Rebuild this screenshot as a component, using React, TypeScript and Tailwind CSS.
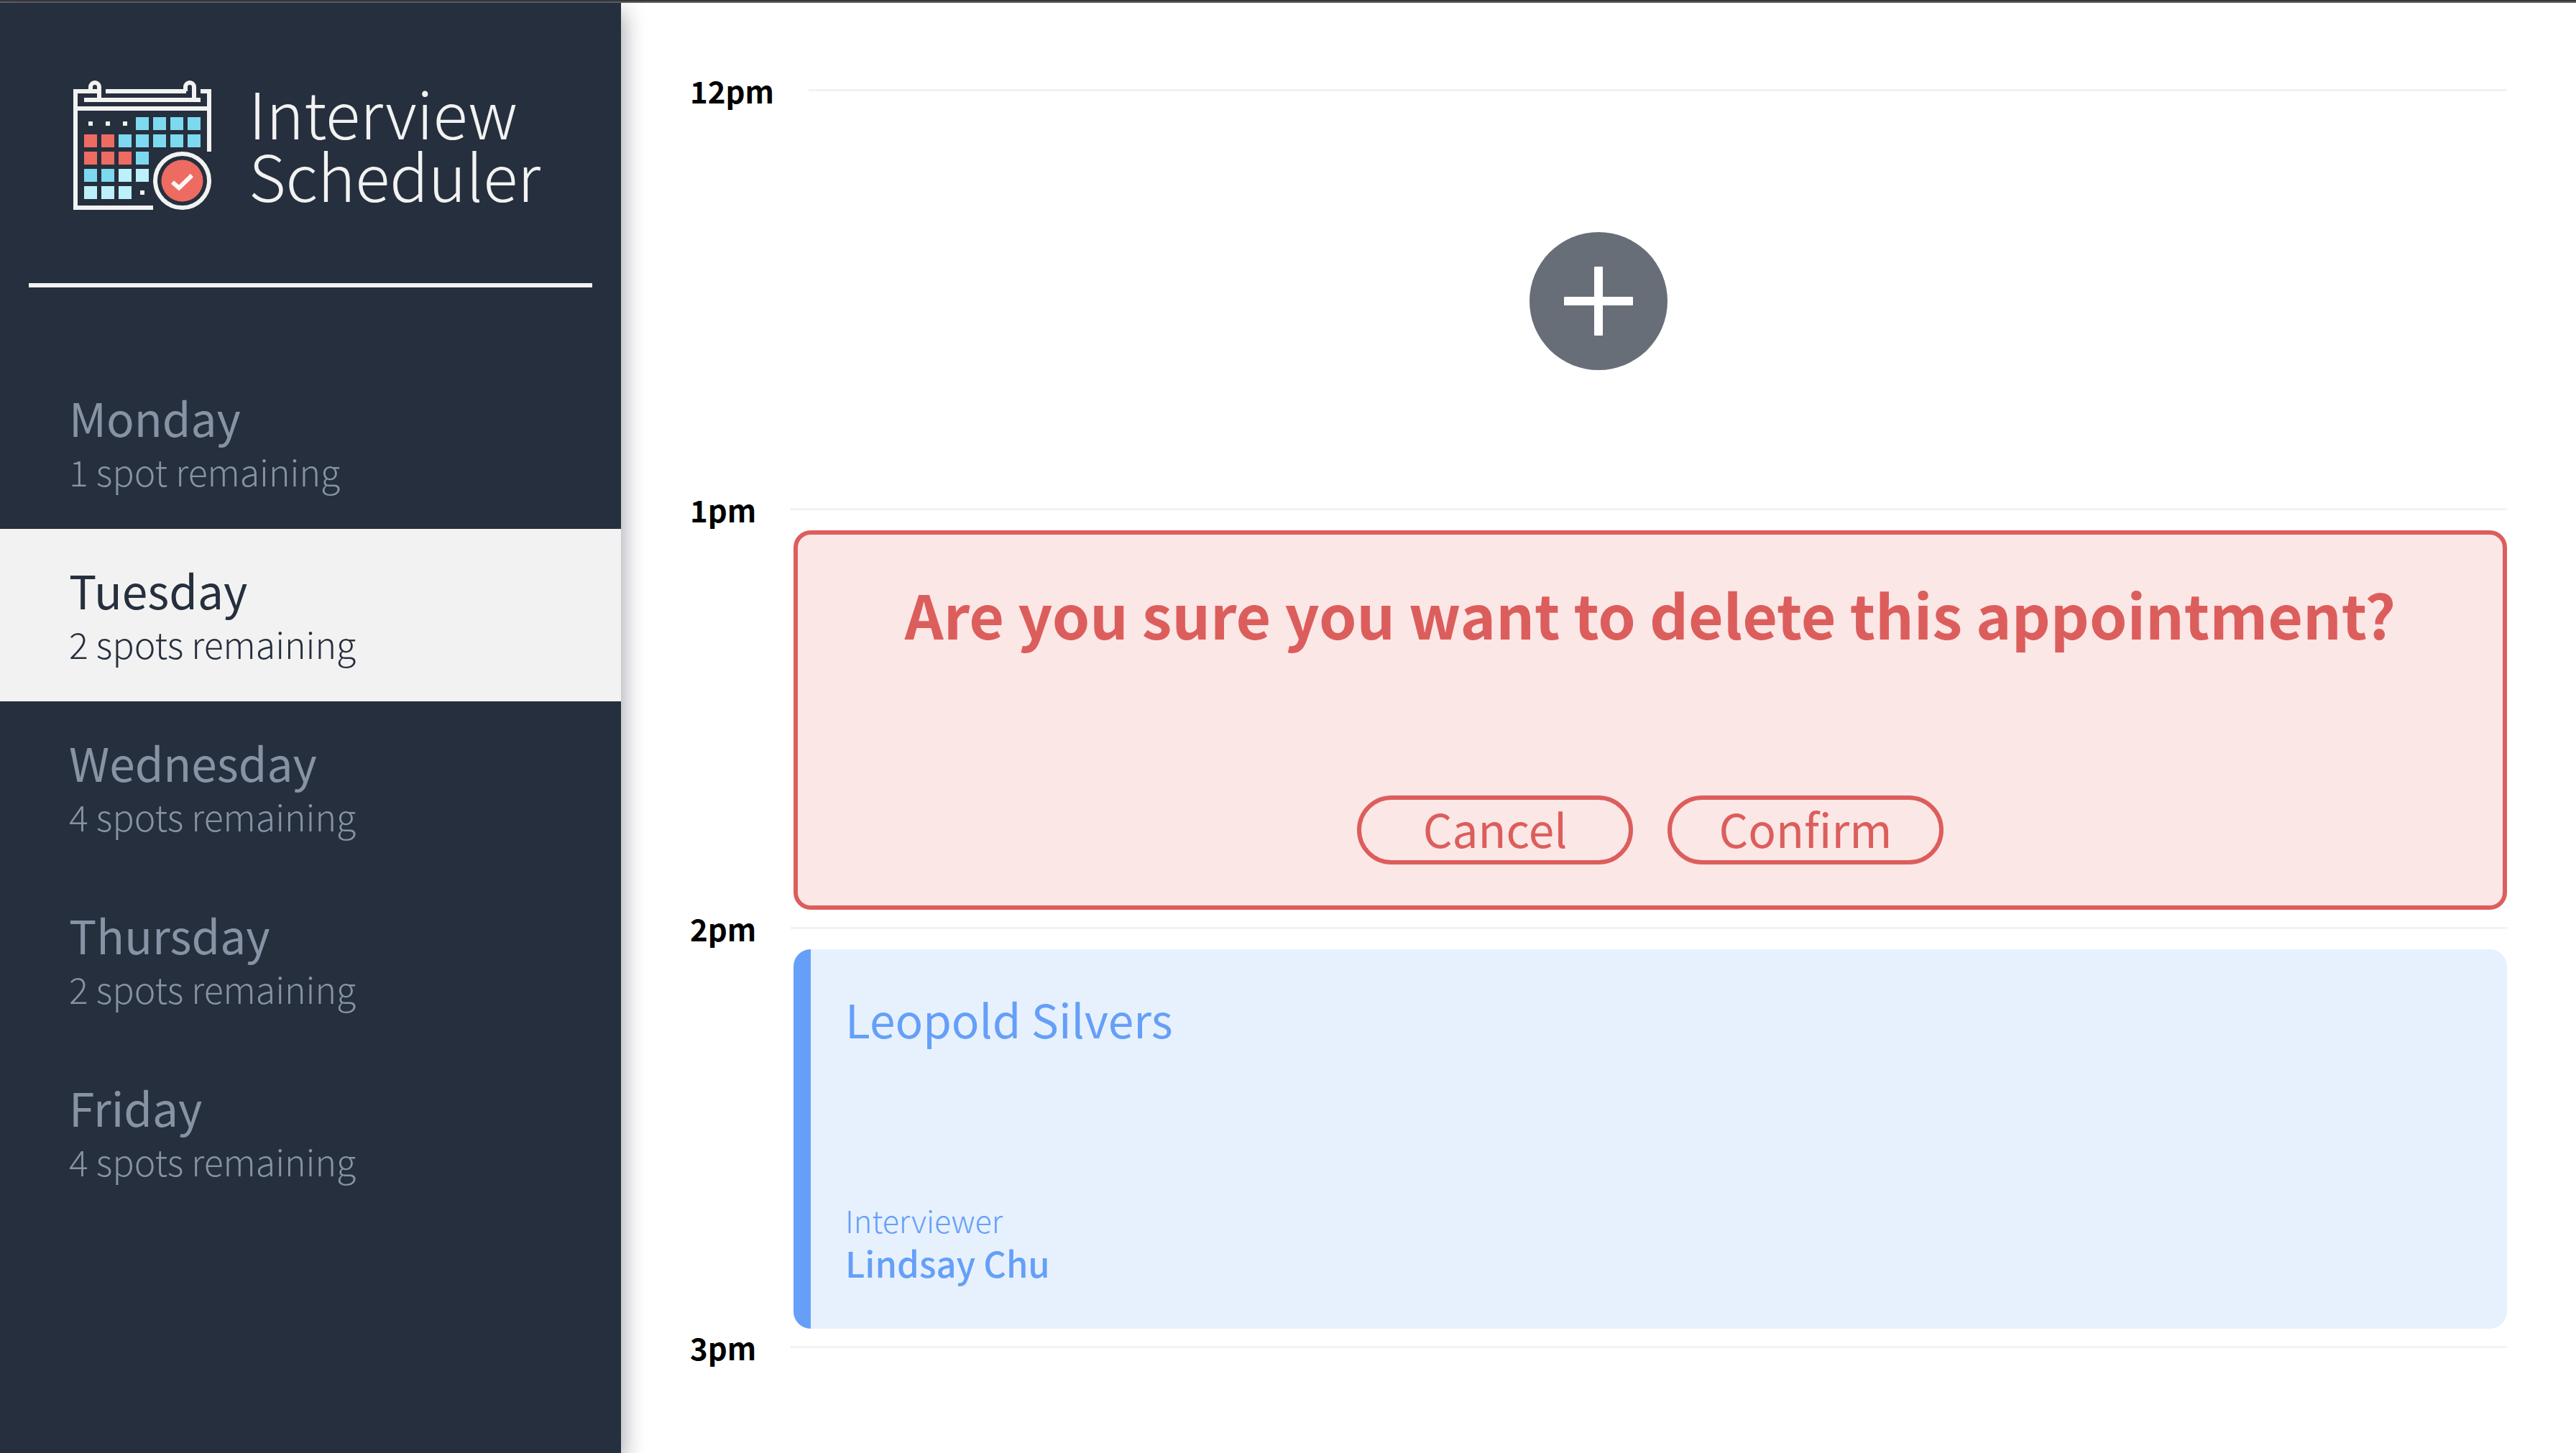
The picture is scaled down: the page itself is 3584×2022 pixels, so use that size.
import type { ReactNode } from "react";

type Day = { name: string; spots: number };

const days: Day[] = [
  { name: "Monday", spots: 1 },
  { name: "Tuesday", spots: 2 },
  { name: "Wednesday", spots: 4 },
  { name: "Thursday", spots: 2 },
  { name: "Friday", spots: 4 },
];

const BLUE = "#7dd9f0";
const PALE = "#bcf0fa";
const RED = "#ee6b62";

// Calendar squares, one row per week; null leaves the cell empty, "dot" draws a marker.
const weeks: (string | null)[][] = [
  ["dot", "dot", "dot", BLUE, BLUE, BLUE, BLUE],
  [RED, RED, BLUE, BLUE, BLUE, BLUE, BLUE],
  [RED, RED, RED, BLUE, null, null, null],
  [BLUE, BLUE, PALE, PALE, null, null, null],
  [PALE, PALE, PALE, "dot", null, null, null],
];

function CalendarLogo() {
  return (
    <svg viewBox="0 0 192 180" className="h-45 w-48 shrink-0" aria-hidden="true" fill="none">
      <g stroke="#f2f2f2" strokeWidth="6">
        <path d="M36 15H3V177H111" />
        <path d="M45 15H157" />
        <path d="M177 15H189V99" />
        <path d="M15 27H177" />
        <path d="M3 39H189" />
        <path d="M24 15V9a6 6 0 0 1 12 0V26" />
        <path d="M156 15V9a6 6 0 0 1 12 0V26" />
      </g>
      {weeks.map((week, row) =>
        week.map((cell, col) => {
          if (!cell) return null;
          const x = 15 + col * 24;
          const y = 51 + row * 24;
          return cell === "dot" ? (
            <rect key={`${row}-${col}`} x={x + 6} y={y + 6} width="6" height="6" fill="#f2f2f2" />
          ) : (
            <rect key={`${row}-${col}`} x={x} y={y} width="18" height="18" fill={cell} />
          );
        }),
      )}
      <circle cx="151.500" cy="139.500" r="37.500" stroke="#f2f2f2" strokeWidth="6" />
      <circle cx="151.500" cy="139.500" r="29" fill={RED} />
      <path d="M138 141.500L147 149.500L165 132" stroke="#fdf6f5" strokeWidth="6" />
    </svg>
  );
}

function DayItem({ day, selected }: { day: Day; selected: boolean }) {
  return (
    <li>
      <button
        type="button"
        aria-pressed={selected}
        className={
          selected
            ? "flex h-60 w-full flex-col justify-center bg-[#f2f2f2] px-24 pb-0.5 text-left text-[#262f3d]"
            : "flex h-60 w-full flex-col justify-center px-24 pb-0.5 text-left text-[#8793a5]"
        }
      >
        <span className="text-[64px] leading-[80px]">{day.name}</span>
        <span className="text-[50px] leading-[70px] font-light">
          {day.spots} {day.spots === 1 ? "spot" : "spots"} remaining
        </span>
      </button>
    </li>
  );
}

function Slot({ time, children }: { time: string; children?: ReactNode }) {
  return (
    <section aria-label={time}>
      <header className="flex h-[51px] items-center gap-12">
        <h4 className="text-[42px] font-bold text-black">{time}</h4>
        <hr className="grow border-t-[3px] border-[#f2f2f2]" />
      </header>
      <div className="pt-1">{children}</div>
    </section>
  );
}

function EmptySlot() {
  return (
    <div className="flex h-132 items-center justify-center">
      <button
        type="button"
        aria-label="Add appointment"
        className="flex size-48 items-center justify-center rounded-full bg-[#686e78]"
      >
        <svg viewBox="0 0 96 96" className="size-24" aria-hidden="true" fill="#ffffff">
          <rect x="0" y="42" width="96" height="12" rx="1" />
          <rect x="42" y="0" width="12" height="96" rx="1" />
        </svg>
      </button>
    </div>
  );
}

function PillButton({ children }: { children: ReactNode }) {
  return (
    <button
      type="button"
      className="flex h-24 w-96 items-center justify-center rounded-full border-6 border-[#dc5e5c] pb-1.5 text-[64px] leading-none"
    >
      {children}
    </button>
  );
}

function ConfirmDelete() {
  return (
    <div className="ml-36 flex h-132 flex-col items-center justify-between rounded-3xl border-6 border-[#dc5e5c] bg-[#fbe7e6] pt-15 pb-[57px] text-[#dc5e5c]">
      <h1 className="text-[84px] leading-[100px] font-bold">
        Are you sure you want to delete this appointment?
      </h1>
      <div className="flex gap-12">
        <PillButton>Cancel</PillButton>
        <PillButton>Confirm</PillButton>
      </div>
    </div>
  );
}

function Appointment({ student, interviewer }: { student: string; interviewer: string }) {
  return (
    <div className="ml-36 flex h-132 flex-col justify-between rounded-3xl border-l-24 border-[#659ff8] bg-[#e7f1fe] px-12 pt-14 pb-[62px] text-[#659ff8]">
      <h2 className="text-[64px] leading-[80px]">{student}</h2>
      <div>
        <h4 className="text-[43px] leading-[60px] font-light">Interviewer</h4>
        <h3 className="text-[49px] leading-[60px] font-medium">{interviewer}</h3>
      </div>
    </div>
  );
}

export default function App() {
  return (
    <div className="flex h-screen flex-col overflow-hidden bg-white font-['Noto_Sans_CJK_SC',sans-serif]">
      <div className="h-1 shrink-0 border-b-2 border-[#5f6063] bg-[#36373b]" />
      <div className="flex min-h-0 grow">
        <aside className="z-10 w-216 shrink-0 bg-[#262f3d] shadow-[4px_12px_28px_rgba(34,40,54,0.4)]">
          <div className="flex h-[390px] items-start gap-13 pt-27 pl-[102px] text-[#f2f2f2]">
            <CalendarLogo />
            <p className="text-[89px] leading-[87px] font-light">
              Interview
              <br />
              Scheduler
            </p>
          </div>
          <hr className="mx-10 border-t-6 border-[#f2f2f2]" />
          <nav aria-label="Days" className="pt-24">
            <ul>
              {days.map((day) => (
                <DayItem key={day.name} day={day} selected={day.name === "Tuesday"} />
              ))}
            </ul>
          </nav>
        </aside>
        <main className="min-w-0 grow overflow-hidden px-24 pt-24">
          <Slot time="12pm">
            <EmptySlot />
          </Slot>
          <Slot time="1pm">
            <ConfirmDelete />
          </Slot>
          <Slot time="2pm">
            <Appointment student="Leopold Silvers" interviewer="Lindsay Chu" />
          </Slot>
          <Slot time="3pm" />
        </main>
      </div>
    </div>
  );
}
